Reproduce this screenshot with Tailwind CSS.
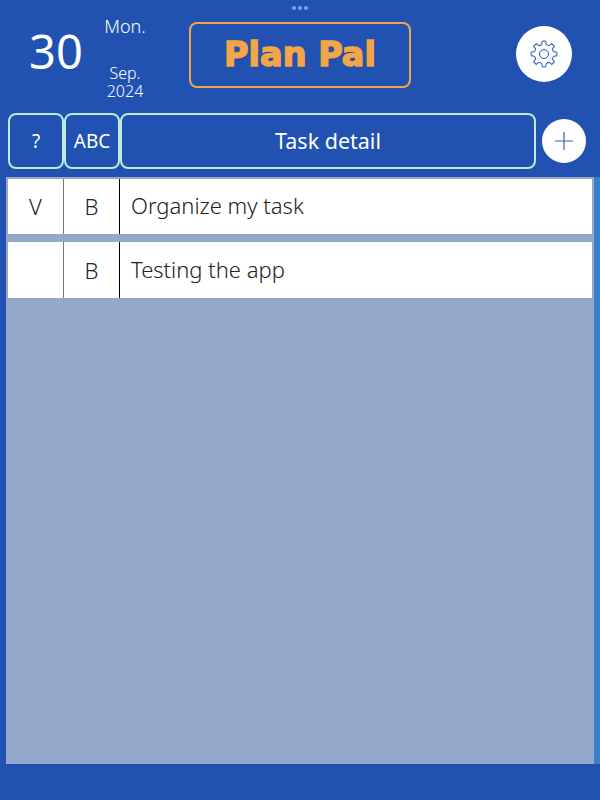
<!DOCTYPE html>
<html lang="en">
<head>
  <meta charset="UTF-8">
  <meta name="viewport" content="width=device-width, initial-scale=1.0">
  <title>Plan Pal</title>
  <script src="https://cdn.jsdelivr.net/npm/@tailwindcss/browser@4"></script>
</head>
<body class="w-[600px] h-[800px] overflow-hidden bg-[#2152b1] font-['Noto_Sans',sans-serif] flex flex-col">

  <!-- Header -->
  <header class="relative h-[113px] shrink-0 flex items-start">
    <div class="absolute left-[292px] top-[6px] flex gap-[2px]">
      <span class="size-[4px] rounded-full bg-[#6ea8f0]"></span>
      <span class="size-[4px] rounded-full bg-[#6ea8f0]"></span>
      <span class="size-[4px] rounded-full bg-[#6ea8f0]"></span>
    </div>

    <div class="w-[112px] h-[108px] pt-[20px] text-center text-white text-[47px] leading-[62px]">30</div>
    <div class="w-[50px] -ml-[12px] flex flex-col items-center text-white">
      <div class="mt-[14px] text-[18px] leading-[24px] font-light whitespace-nowrap">Mon.</div>
      <div class="mt-[26px] text-[16px] leading-[18px] font-light">Sep.</div>
      <div class="text-[16px] leading-[18px] font-light">2024</div>
    </div>

    <div class="ml-[39px] mt-[22px] w-[222px] h-[66px] rounded-[8px] border-2 border-[#f2a54a] flex items-center justify-center">
      <span class="text-[#f2a54a] text-[33.5px] font-bold font-['DejaVu_Sans',sans-serif] whitespace-nowrap [-webkit-text-stroke:1.5px_#f2a54a] [text-shadow:1px_1px_1px_#17397f]">Plan Pal</span>
    </div>

    <div class="ml-[105px] mt-[26px] size-[56px] rounded-full bg-white flex items-center justify-center">
      <svg width="32" height="32" viewBox="0 0 32 32" fill="none" stroke="#2152b1" stroke-width="1" stroke-linejoin="round">
        <path d="M13.68 6.69L14.19 3.13H17.81L18.32 6.69A9.6 9.6 0 0 1 20.94 7.77"/>
        <path transform="rotate(45 16 16)" d="M13.68 6.69L14.19 3.13H17.81L18.32 6.69A9.6 9.6 0 0 1 20.94 7.77"/>
        <path transform="rotate(90 16 16)" d="M13.68 6.69L14.19 3.13H17.81L18.32 6.69A9.6 9.6 0 0 1 20.94 7.77"/>
        <path transform="rotate(135 16 16)" d="M13.68 6.69L14.19 3.13H17.81L18.32 6.69A9.6 9.6 0 0 1 20.94 7.77"/>
        <path transform="rotate(180 16 16)" d="M13.68 6.69L14.19 3.13H17.81L18.32 6.69A9.6 9.6 0 0 1 20.94 7.77"/>
        <path transform="rotate(225 16 16)" d="M13.68 6.69L14.19 3.13H17.81L18.32 6.69A9.6 9.6 0 0 1 20.94 7.77"/>
        <path transform="rotate(270 16 16)" d="M13.68 6.69L14.19 3.13H17.81L18.32 6.69A9.6 9.6 0 0 1 20.94 7.77"/>
        <path transform="rotate(315 16 16)" d="M13.68 6.69L14.19 3.13H17.81L18.32 6.69A9.6 9.6 0 0 1 20.94 7.77"/>
        <circle cx="16" cy="16" r="4.5"/>
      </svg>
    </div>
  </header>

  <!-- Column headings -->
  <div class="h-[56px] shrink-0 pl-[8px] flex text-white text-[19px]">
    <div class="w-[56px] rounded-[8px] border-2 border-[#bdebd8] flex items-center justify-center">?</div>
    <div class="w-[56px] rounded-[8px] border-2 border-[#bdebd8] flex items-center justify-center">ABC</div>
    <div class="w-[416px] rounded-[8px] border-2 border-[#bdebd8] flex items-center justify-center text-[21.5px]">Task detail</div>
    <div class="ml-[6px] mt-[6px] size-[44px] rounded-full bg-white flex items-center justify-center">
      <svg width="20" height="20" viewBox="0 0 20 20" stroke="#3f5fb5" stroke-width="1.2">
        <path d="M10 1v18M1 10h18"/>
      </svg>
    </div>
  </div>

  <!-- Task list -->
  <div class="flex mt-[8px] h-[587px] shrink-0">
    <main class="ml-[6px] w-[588px] bg-[#94a8cc] p-[2px] flex flex-col gap-[8px] text-[#222] text-[22px] font-light">
      <div class="h-[55px] bg-white flex items-center">
        <div class="w-[56px] h-full border-r border-[#777] flex items-center justify-center">V</div>
        <div class="w-[56px] h-full border-r border-black flex items-center justify-center">B</div>
        <div class="pl-[11px] pb-[2px]">Organize my task</div>
      </div>
      <div class="h-[56px] bg-white flex items-center">
        <div class="w-[56px] h-full border-r border-[#777]"></div>
        <div class="w-[56px] h-full border-r border-black flex items-center justify-center">B</div>
        <div class="pl-[11px] pb-[2px]">Testing the app</div>
      </div>
    </main>
    <div class="w-[6px] bg-[#3b7fc6]"></div>
  </div>

</body>
</html>
